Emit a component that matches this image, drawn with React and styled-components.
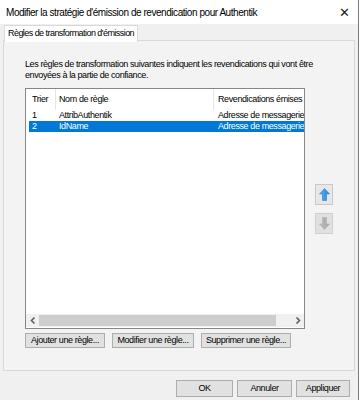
import React from 'react';
import styled, { createGlobalStyle } from 'styled-components';

const GlobalStyle = createGlobalStyle`
  html, body { margin: 0; padding: 0; background: #f0f0f0; }
  body { font-family: "Liberation Sans", Arial, sans-serif; color: #000; }
`;

const Window = styled.div`
  width: 359px;
  height: 400px;
  display: flex;
  flex-direction: column;
  background: #f0f0f0;
  border-right: 1px solid #7a7a7a;
  box-sizing: border-box;
  overflow: hidden;
`;

const TitleBar = styled.div`
  height: 24px;
  flex: none;
  background: #fff;
  display: flex;
  align-items: center;
  justify-content: space-between;
  padding: 0 8px 0 6px;
  font-size: 10px;
  letter-spacing: -0.45px;
`;

const Close = styled.span`
  font-size: 13px;
  color: #222;
`;

const Body = styled.div`
  padding: 1px 3px 0 3px;
  display: flex;
  flex-direction: column;
  font-size: 9px;
  letter-spacing: -0.4px;
`;

const TabStrip = styled.div`
  display: flex;
  padding-left: 1px;
  height: 15px;
`;

const Tab = styled.div`
  background: #fff;
  border: 1px solid #d9d9d9;
  border-bottom: none;
  padding: 0 3px;
  line-height: 15px;
  height: 16px;
  z-index: 1;
  letter-spacing: -0.55px;
`;

const TabPanel = styled.div`
  height: 331px;
  box-sizing: border-box;
  border: 1px solid #d9d9d9;
  background: #f3f3f3;
  padding: 18px 0 0 21px;
  display: flex;
  flex-direction: column;
`;

const Description = styled.p`
  margin: 0;
  line-height: 11px;
  width: 300px;
`;

const ListArea = styled.div`
  display: flex;
  align-items: center;
  gap: 10px;
  margin-top: 7px;
`;

const ListBox = styled.div`
  width: 280px;
  height: 241px;
  box-sizing: border-box;
  border: 1px solid #828790;
  background: #fff;
  display: flex;
  flex-direction: column;
  padding: 0 0 0 3px;
`;

const Rows = styled.div`
  flex: 1;
  overflow: hidden;
`;

const Grid = styled.div`
  display: grid;
  grid-template-columns: 27px 158px 91px;
  white-space: nowrap;
`;

const HeaderCell = styled.div`
  height: 21px;
  line-height: 21px;
  padding-left: ${p => p.$pad}px;
  border-right: ${p => (p.$last ? 'none' : '1px solid #e5e5e5')};
  overflow: hidden;
`;

const Row = styled(Grid)`
  height: 11px;
  line-height: 11px;
  background: ${p => (p.$selected ? '#0078d7' : 'transparent')};
  color: ${p => (p.$selected ? '#fff' : '#000')};
`;

const Cell = styled.div`
  padding-left: ${p => p.$pad}px;
  overflow: hidden;
`;

const ScrollBar = styled.div`
  height: 13px;
  margin: 0 0 1px -3px;
  display: flex;
  align-items: center;
  background: #f0f0f0;
`;

const ScrollArrow = styled.div`
  width: 13px;
  height: 13px;
  display: flex;
  align-items: center;
  justify-content: center;
`;

const Thumb = styled.div`
  flex: 1;
  height: 11px;
  background: #cdcdcd;
  margin-right: 15px;
`;

const MoveButtons = styled.div`
  display: flex;
  flex-direction: column;
  gap: 8px;
`;

const MoveButton = styled.div`
  width: 18px;
  height: 21px;
  box-sizing: border-box;
  border: 1px solid ${p => (p.$disabled ? '#d0d0d0' : '#c9c9c9')};
  background: ${p => (p.$disabled ? '#e0e0e0' : '#e7e7e7')};
  display: flex;
  align-items: center;
  justify-content: center;
`;

const ButtonRow = styled.div`
  display: flex;
  gap: 7px;
  margin-top: 4px;
`;

const Button = styled.div`
  height: 15px;
  box-sizing: border-box;
  width: ${p => p.$w}px;
  border: 1px solid #adadad;
  background: #e1e1e1;
  line-height: 13px;
  text-align: center;
  white-space: nowrap;
`;

const Footer = styled.div`
  display: flex;
  justify-content: flex-end;
  gap: 4px;
  padding: 9px 5px 0 0;
`;

const FooterButton = styled(Button)`
  height: 17px;
  line-height: 15px;
`;

const Chevron = ({ dir }) => (
  <svg width="6" height="7" viewBox="0 0 6 7">
    <path
      d={dir === 'left' ? 'M4.5 0.5 L1.5 3.5 L4.5 6.5' : 'M1.5 0.5 L4.5 3.5 L1.5 6.5'}
      fill="none"
      stroke="#606060"
      strokeWidth="1.6"
    />
  </svg>
);

const Arrow = ({ up, disabled }) => (
  <svg width="11" height="13" viewBox="0 0 11 13">
    <defs>
      <linearGradient id={up ? 'ga' : 'gb'} x1="0" y1="0" x2="1" y2="0">
        <stop offset="0" stopColor={disabled ? '#bdbdbd' : '#5fb4f2'} />
        <stop offset="1" stopColor={disabled ? '#a5a5a5' : '#1c84d6'} />
      </linearGradient>
    </defs>
    <path
      d={up ? 'M5.5 0.5 L10.5 6 L7.5 6 L7.5 12.5 L3.5 12.5 L3.5 6 L0.5 6 Z' : 'M5.5 12.5 L10.5 7 L7.5 7 L7.5 0.5 L3.5 0.5 L3.5 7 L0.5 7 Z'}
      fill={`url(#${up ? 'ga' : 'gb'})`}
      stroke={disabled ? '#b0b0b0' : '#2a7fc8'}
      strokeWidth="0.6"
    />
  </svg>
);

const rules = [
  { order: '1', name: 'AttribAuthentik', claims: 'Adresse de messagerie;Common Name' },
  { order: '2', name: 'IdName', claims: 'Adresse de messagerie' },
];

const App = () => {
  return (
    <>
      <GlobalStyle />
      <Window>
        <TitleBar>
          <span>Modifier la stratégie d'émission de revendication pour Authentik</span>
          <Close>✕</Close>
        </TitleBar>
        <Body>
          <TabStrip>
            <Tab>Règles de transformation d'émission</Tab>
          </TabStrip>
          <TabPanel>
            <Description>
              Les règles de transformation suivantes indiquent les revendications qui vont être
              envoyées à la partie de confiance.
            </Description>
            <ListArea>
              <ListBox>
                <Rows>
                  <Grid>
                    <HeaderCell $pad={3}>Trier</HeaderCell>
                    <HeaderCell $pad={3}>Nom de règle</HeaderCell>
                    <HeaderCell $pad={4} $last>Revendications émises</HeaderCell>
                  </Grid>
                  {rules.map((r, i) => (
                    <Row key={r.order} $selected={i === 1}>
                      <Cell $pad={3}>{r.order}</Cell>
                      <Cell $pad={3}>{r.name}</Cell>
                      <Cell $pad={4}>{r.claims}</Cell>
                    </Row>
                  ))}
                </Rows>
                <ScrollBar>
                  <ScrollArrow><Chevron dir="left" /></ScrollArrow>
                  <Thumb />
                  <ScrollArrow><Chevron dir="right" /></ScrollArrow>
                </ScrollBar>
              </ListBox>
              <MoveButtons>
                <MoveButton><Arrow up /></MoveButton>
                <MoveButton $disabled><Arrow disabled /></MoveButton>
              </MoveButtons>
            </ListArea>
            <ButtonRow>
              <Button $w={80}>Ajouter une règle...</Button>
              <Button $w={82}>Modifier une règle...</Button>
              <Button $w={90}>Supprimer une règle...</Button>
            </ButtonRow>
          </TabPanel>
          <Footer>
            <FooterButton $w={57}>OK</FooterButton>
            <FooterButton $w={55}>Annuler</FooterButton>
            <FooterButton $w={54}>Appliquer</FooterButton>
          </Footer>
        </Body>
      </Window>
    </>
  );
};

export default App;
